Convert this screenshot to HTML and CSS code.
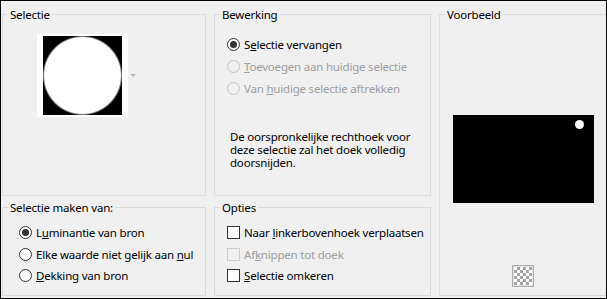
FILE: index.html
```html
<!DOCTYPE html>
<html lang="nl">
<head>
  <meta charset="UTF-8">
  <title>Selectie van masker</title>
  <link rel="stylesheet" href="styles.css">
</head>
<body>

  <div class="dialog">

    <!-- Selectie -->
    <fieldset class="group group-source">
      <legend>Selectie</legend>
      <div class="source-row">
        <div class="thumb">
          <div class="thumb-img"></div>
        </div>
        <span class="drop-arrow"></span>
      </div>
    </fieldset>

    <!-- Bewerking -->
    <fieldset class="group group-mode">
      <legend>Bewerking</legend>
      <div class="options">
        <label class="option"><span class="radio checked"></span><span>S<u>e</u>lectie vervangen</span></label>
        <label class="option disabled"><span class="radio"></span><span><u>T</u>oevoegen aan huidige selectie</span></label>
        <label class="option disabled"><span class="radio"></span><span>Van <u>h</u>uidige selectie aftrekken</span></label>
      </div>
      <p class="note">De oorspronkelijke rechthoek voor deze selectie zal het doek volledig doorsnijden.</p>
    </fieldset>

    <!-- Voorbeeld -->
    <fieldset class="group group-preview">
      <legend>Voorbeeld</legend>
      <div class="preview-area">
        <div class="preview">
          <span class="preview-dot"></span>
        </div>
        <button class="checker-btn" type="button"><span class="checker"></span></button>
      </div>
    </fieldset>

    <!-- Selectie maken van -->
    <fieldset class="group group-from">
      <legend>Selectie maken van:</legend>
      <div class="options options-low">
        <label class="option"><span class="radio checked"></span><span>L<u>u</u>minantie van bron</span></label>
        <label class="option"><span class="radio"></span><span>Elke waarde niet gelijk aan <u>n</u>ul</span></label>
        <label class="option"><span class="radio"></span><span><u>D</u>ekking van bron</span></label>
      </div>
    </fieldset>

    <!-- Opties -->
    <fieldset class="group group-opts">
      <legend>Opties</legend>
      <div class="options options-low">
        <label class="option"><span class="check"></span><span>Naar <u>l</u>inkerbovenhoek verplaatsen</span></label>
        <label class="option disabled"><span class="check"></span><span>Af<u>k</u>nippen tot doek</span></label>
        <label class="option"><span class="check"></span><span><u>S</u>electie omkeren</span></label>
      </div>
    </fieldset>

  </div>

</body>
</html>
```

FILE: styles.css
```css
/* Reset */
* {
  margin: 0;
  padding: 0;
  box-sizing: border-box;
}
body {
  font-family: "Noto Sans", "Open Sans", sans-serif;
  font-size: 11.5px;
  letter-spacing: -0.2px;
  color: #000;
  background-color: #f0f0f0;
}

/* Dialog frame */
.dialog {
  width: 607px;
  height: 299px;
  border: 1px solid #000;
  background-color: #f0f0f0;
  overflow: hidden;
  display: grid;
  grid-template-columns: 204px 217px 168px;
  grid-template-rows: 189px 96px;
  column-gap: 8px;
  row-gap: 4px;
  padding: 6px 0 0 1px;
}

/* Group boxes */
.group {
  border: 1px solid #dcdcdc;
  min-width: 0;
  padding: 0;
}
.group legend {
  margin-left: 5px;
  padding: 0 2px;
  line-height: 15px;
}
.group-preview {
  grid-column: 3;
  grid-row: 1 / span 2;
}
.group-from {
  grid-column: 1;
  grid-row: 2;
}
.group-opts {
  grid-column: 2;
  grid-row: 2;
}

/* Selectie source */
.source-row {
  display: flex;
  align-items: center;
  gap: 2px;
  padding: 12px 0 0 34px;
}
.thumb {
  width: 91px;
  height: 83px;
  background-color: #fff;
  padding: 2px 6px;
}
.thumb-img {
  width: 79px;
  height: 79px;
  background: radial-gradient(circle closest-side, #fff 96%, #000 101%);
}
.drop-arrow {
  width: 0;
  height: 0;
  border-left: 3px solid transparent;
  border-right: 3px solid transparent;
  border-top: 3px solid #b4b4b4;
}

/* Radio and check rows */
.options {
  display: flex;
  flex-direction: column;
  padding: 11px 0 0 12px;
}
.options-low {
  padding-top: 7px;
}
.options-low .option {
  height: 21.5px;
}
.group-from .options {
  padding-left: 16px;
}
.option {
  display: flex;
  align-items: center;
  height: 22px;
  line-height: 15px;
  white-space: nowrap;
}
.option.disabled {
  color: #9d9d9d;
}
.radio {
  width: 13px;
  height: 13px;
  border: 1px solid #333;
  border-radius: 50%;
  background-color: #fff;
  margin-right: 4px;
  display: flex;
  align-items: center;
  justify-content: center;
  flex-shrink: 0;
}
.radio.checked::after {
  content: "";
  width: 7px;
  height: 7px;
  border-radius: 50%;
  background-color: #333;
}
.option.disabled .radio {
  border-color: #c4c4c4;
  background-color: #f0f0f0;
}
.check {
  width: 13px;
  height: 13px;
  border: 1px solid #333;
  background-color: #fff;
  margin-right: 4px;
  flex-shrink: 0;
}
.option.disabled .check {
  border-color: #cccccc;
  background-color: #f0f0f0;
}

/* Note under Bewerking */
.note {
  padding: 31px 10px 0 15px;
  line-height: 13px;
}

/* Voorbeeld */
.preview-area {
  display: flex;
  flex-direction: column;
  align-items: center;
  padding-top: 93px;
  gap: 62px;
}
.preview {
  width: 141px;
  height: 88px;
  background-color: #000;
  position: relative;
}
.preview-dot {
  position: absolute;
  left: 122px;
  top: 5px;
  width: 9px;
  height: 9px;
  border-radius: 50%;
  background-color: #fff;
}
.checker-btn {
  width: 22px;
  height: 22px;
  border: 1px solid #adadad;
  background-color: #e1e1e1;
  padding: 1px;
}
.checker {
  display: block;
  width: 18px;
  height: 18px;
  background-color: #fff;
  background-image:
    linear-gradient(45deg, #a5a5a5 25%, transparent 25%, transparent 75%, #a5a5a5 75%),
    linear-gradient(45deg, #a5a5a5 25%, transparent 25%, transparent 75%, #a5a5a5 75%);
  background-size: 6px 6px;
  background-position: 0 0, 3px 3px;
}
```
